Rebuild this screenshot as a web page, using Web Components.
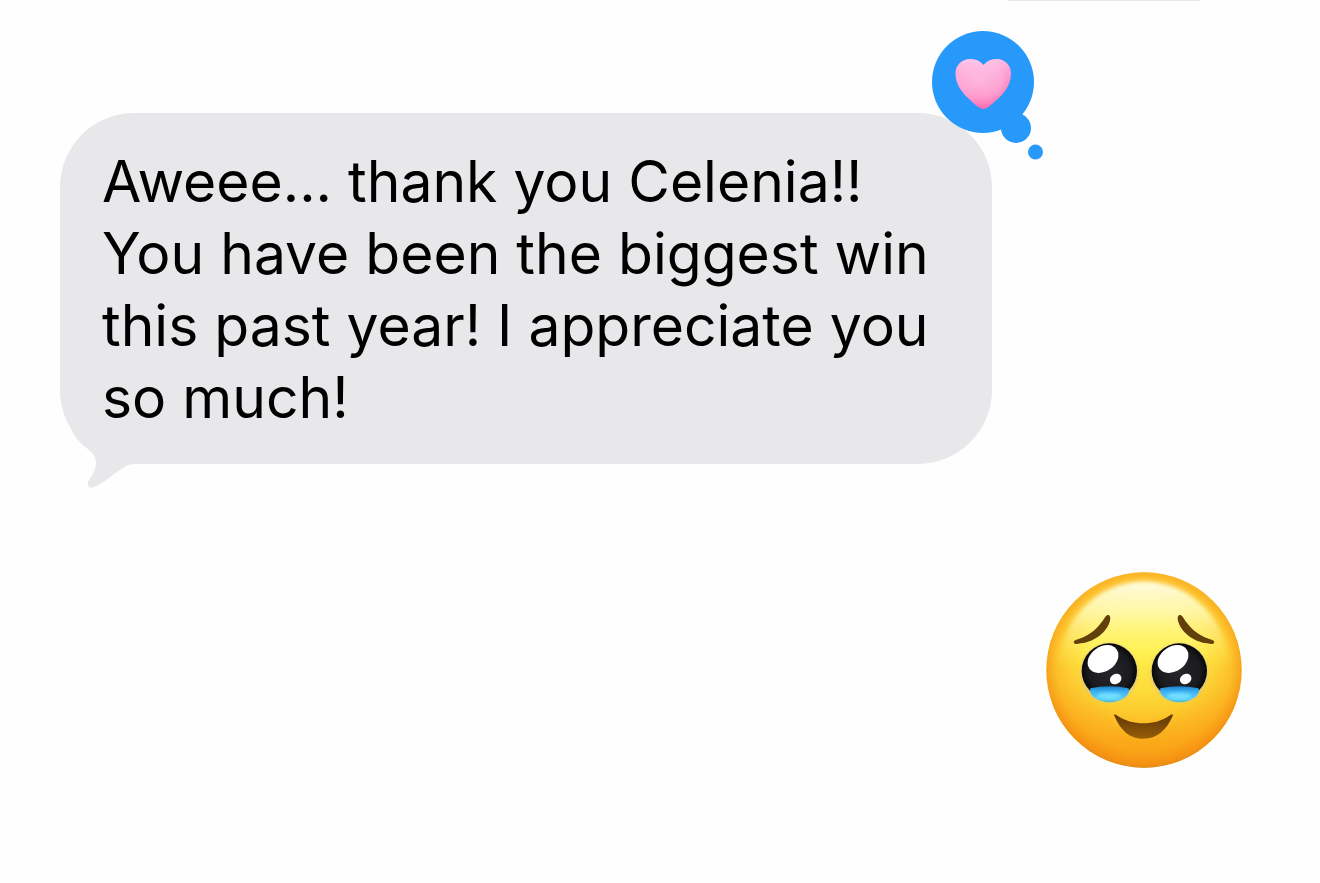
<!DOCTYPE html>
<html lang="en">
<head>
<meta charset="UTF-8">
<meta name="viewport" content="width=device-width, initial-scale=1.0">
<title>Messages</title>
<style>
  body {
    margin: 0;
    background: #fefefe;
    color: #000;
    font-family: Inter, "Liberation Sans", sans-serif;
  }
</style>
</head>
<body>
  <chat-thread>
    <chat-bubble>
      Aweee... thank you Celenia!! You have been the biggest win this past year! I appreciate you so much!
      <tapback-heart slot="reaction"></tapback-heart>
    </chat-bubble>
    <emoji-tears class="sent"></emoji-tears>
  </chat-thread>

<script>
// Conversation column, the edge of the previous bubble shows at the top
class ChatThread extends HTMLElement {
  constructor() {
    super();
    this.attachShadow({ mode: "open" });
  }

  connectedCallback() {
    this.shadowRoot.innerHTML = `
      <style>
        :host { display: block; }
        .previous {
          width: 192px;
          height: 1px;
          margin: 0 120px 0 auto;
          background: #e8e8ea;
        }
        .messages {
          display: flex;
          flex-direction: column;
          align-items: flex-start;
          gap: 108px;
          padding: 112px 78px 112px 60px;
        }
        ::slotted(.sent) { align-self: flex-end; }
      </style>
      <div class="previous"></div>
      <main class="messages"><slot></slot></main>
    `;
  }
}

// Received message: grey bubble with a tail and an optional reaction
class ChatBubble extends HTMLElement {
  constructor() {
    super();
    this.attachShadow({ mode: "open" });
  }

  connectedCallback() {
    this.shadowRoot.innerHTML = `
      <style>
        :host {
          display: block;
          position: relative;
          box-sizing: border-box;
          max-width: calc(100% - 250px);
          padding: 33px 42px 30px;
          border-radius: 74px;
          background: #e8e8ea;
        }
        p {
          margin: 0;
          font-size: 57px;
          line-height: 72px;
        }
        .tail {
          position: absolute;
          left: 0;
          bottom: -24px;
          width: 80px;
          height: 64px;
        }
        slot[name="reaction"]::slotted(*) {
          position: absolute;
          top: -83px;
          right: -52px;
        }
      </style>
      <p><slot></slot></p>
      <svg class="tail" viewBox="0 0 80 64" aria-hidden="true">
        <path fill="#e8e8ea" d="M10 3C15 13 19 18 25 23C32 28 36 32 36 39C36 47 31 52 28 58C27 63 30 65 34 63C44 59 52 51 60 46C66 42 69 40 76 40L60 10Z"/>
      </svg>
      <slot name="reaction"></slot>
    `;
  }
}

class TapbackHeart extends HTMLElement {
  constructor() {
    super();
    this.attachShadow({ mode: "open" });
  }

  connectedCallback() {
    this.shadowRoot.innerHTML = `
      <style>
        :host { display: block; width: 112px; height: 130px; }
        svg { display: block; }
      </style>
      <svg width="112" height="130" viewBox="0 0 112 130" role="img" aria-label="Heart reaction">
        <defs>
          <radialGradient id="pink" cx="0.42" cy="0.4" r="0.65">
            <stop offset="0" stop-color="#ffb4dc"/>
            <stop offset="0.6" stop-color="#fda3d2"/>
            <stop offset="1" stop-color="#f56cb1"/>
          </radialGradient>
          <linearGradient id="shine" x1="0" y1="0" x2="0" y2="1">
            <stop offset="0" stop-color="#ffd0f0" stop-opacity="0.8"/>
            <stop offset="0.5" stop-color="#ffb4de" stop-opacity="0.2"/>
            <stop offset="1" stop-color="#ff5fa8" stop-opacity="0.5"/>
          </linearGradient>
        </defs>
        <g fill="#2799fb">
          <circle cx="51" cy="52" r="51"/>
          <circle cx="84" cy="98" r="15"/>
          <circle cx="103.5" cy="122" r="7.5"/>
        </g>
        <path fill="url(#pink)" d="M51.5 35C48 31 44 29 38.500 29C29.500 29 23.500 35.500 23.500 43.500C23.500 57 33 66 45 76Q51.500 82 57.500 76C70 66 79 57 79 43.500C79 35.500 73 29 64.500 29C59 29 55 31 51.500 35Z"/>
        <path fill="url(#shine)" d="M51.5 35C48 31 44 29 38.500 29C29.500 29 23.500 35.500 23.500 43.500C23.500 57 33 66 45 76Q51.500 82 57.500 76C70 66 79 57 79 43.500C79 35.500 73 29 64.500 29C59 29 55 31 51.500 35Z"/>
      </svg>
    `;
  }
}

// Face holding back tears
class EmojiTears extends HTMLElement {
  constructor() {
    super();
    this.attachShadow({ mode: "open" });
  }

  eye(x) {
    return `
      <g transform="translate(${x} 297)">
        <ellipse cy="5" rx="86" ry="88" fill="#d9c38a" opacity="0.8" filter="url(#soft)"/>
        <circle r="83" fill="url(#pupil)"/>
        <ellipse cx="-19" cy="-36" rx="50" ry="37" transform="rotate(-35 -19 -36)" fill="#fff"/>
        <ellipse cx="19" cy="24" rx="18" ry="15" transform="rotate(-30 19 24)" fill="#fff"/>
        <path d="M-57 52Q0 40 58 52C64 74 34 94 0 94C-34 94-63 74-57 52Z" fill="url(#tear)"/>
        <ellipse cy="74" rx="36" ry="9" fill="#7ce6ff" opacity="0.8" filter="url(#soft)"/>
      </g>`;
  }

  render() {
    this.shadowRoot.innerHTML = `
      <style>
        :host { display: block; width: 196px; height: 196px; }
        svg { display: block; width: 100%; height: 100%; }
      </style>
      <svg viewBox="0 0 588 588" role="img" aria-label="Face holding back tears">
        <defs>
          <linearGradient id="face" x1="0" y1="0" x2="0" y2="1">
            <stop offset="0" stop-color="#fde047"/>
            <stop offset="0.38" stop-color="#fff24a"/>
            <stop offset="0.6" stop-color="#fddc3a"/>
            <stop offset="0.85" stop-color="#fcb41f"/>
            <stop offset="1" stop-color="#f4a018"/>
          </linearGradient>
          <radialGradient id="rim" cx="0.5" cy="0.47" r="0.54">
            <stop offset="0.5" stop-color="#fb9d12" stop-opacity="0"/>
            <stop offset="0.82" stop-color="#fb9d12" stop-opacity="0.5"/>
            <stop offset="0.95" stop-color="#f48d12" stop-opacity="0.85"/>
            <stop offset="1" stop-color="#d58a22"/>
          </radialGradient>
          <linearGradient id="gloss" x1="0" y1="0" x2="0" y2="1">
            <stop offset="0" stop-color="#fffce0"/>
            <stop offset="0.18" stop-color="#fffbb4" stop-opacity="0.85"/>
            <stop offset="0.5" stop-color="#fff25a" stop-opacity="0"/>
          </linearGradient>
          <radialGradient id="pupil" cx="0.5" cy="0.5" r="0.5">
            <stop offset="0" stop-color="#26262a"/>
            <stop offset="0.75" stop-color="#1b1b1f"/>
            <stop offset="1" stop-color="#08080a"/>
          </radialGradient>
          <linearGradient id="tear" x1="0" y1="0" x2="0" y2="1">
            <stop offset="0" stop-color="#1c7fc8"/>
            <stop offset="0.3" stop-color="#39aef2"/>
            <stop offset="0.8" stop-color="#5fd2fb"/>
            <stop offset="1" stop-color="#50b4c4"/>
          </linearGradient>
          <linearGradient id="mouth" x1="0" y1="0" x2="0" y2="1">
            <stop offset="0" stop-color="#5f3606"/>
            <stop offset="1" stop-color="#985f08"/>
          </linearGradient>
          <filter id="soft" x="-20%" y="-20%" width="140%" height="140%">
            <feGaussianBlur stdDeviation="4"/>
          </filter>
          <filter id="haze" x="-20%" y="-20%" width="140%" height="140%">
            <feGaussianBlur stdDeviation="7"/>
          </filter>
        </defs>
        <circle cx="294" cy="294" r="293" fill="url(#face)"/>
        <circle cx="294" cy="294" r="293" fill="url(#rim)"/>
        <ellipse cx="294" cy="292" rx="256" ry="264" fill="url(#gloss)" filter="url(#haze)"/>
        ${this.eye(190)}
        ${this.eye(400)}
        <g fill="#63400a">
          <path d="M84 208C80 216 90 218 104 214C148 209 184 178 192 146C196 130 186 124 178 134C158 167 132 190 98 201C91 203 87 204 84 208Z"/>
          <path d="M504 208C508 216 498 218 484 214C440 209 404 178 396 146C392 130 402 124 410 134C430 167 456 190 490 201C497 203 501 204 504 208Z"/>
        </g>
        <path d="M205 431C202 425 209 427 214 431C258 461 328 461 370 431C376 427 382 425 380 432C360 476 334 500 292 500C251 500 224 476 205 431Z" fill="url(#mouth)"/>
      </svg>
    `;
  }

  connectedCallback() {
    this.render();
  }
}

customElements.define("chat-thread", ChatThread);
customElements.define("chat-bubble", ChatBubble);
customElements.define("tapback-heart", TapbackHeart);
customElements.define("emoji-tears", EmojiTears);
</script>
</body>
</html>
